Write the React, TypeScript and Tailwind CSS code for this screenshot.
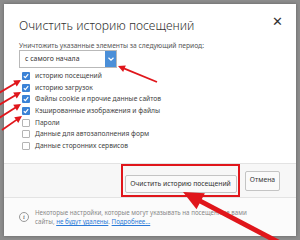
import React from "react";

const items = [
  { label: "историю посещений", checked: true },
  { label: "историю загрузок", checked: true },
  { label: "Файлы cookie и прочие данные сайтов", checked: true },
  { label: "Кэшированные изображения и файлы", checked: true },
  { label: "Пароли", checked: false },
  { label: "Данные для автозаполнения форм", checked: false },
  { label: "Данные сторонних сервисов", checked: false },
];

const Arrow = ({ x1, y1, x2, y2, w, head, hw }: { x1: number; y1: number; x2: number; y2: number; w: number; head: number; hw: number }) => {
  // arrow pointing from (x1,y1) to tip (x2,y2)
  const dx = x2 - x1;
  const dy = y2 - y1;
  const len = Math.hypot(dx, dy);
  const ux = dx / len;
  const uy = dy / len;
  const bx = x2 - ux * head;
  const by = y2 - uy * head;
  const px = -uy;
  const py = ux;
  const pts = `${x2},${y2} ${bx + px * hw},${by + py * hw} ${bx - px * hw},${by - py * hw}`;
  return (
    <g>
      <line x1={x1} y1={y1} x2={bx + ux * 2} y2={by + uy * 2} stroke="#e0161b" strokeWidth={w} />
      <polygon points={pts} fill="#e0161b" />
    </g>
  );
};

export default function App() {
  return (
    <div
      className="relative w-[300px] h-[240px] overflow-hidden bg-[#8c8c8c] pt-[4px] pl-[4px]"
      style={{ fontFamily: '"Noto Sans", "Open Sans", sans-serif' }}
    >
      <div className="w-[292px] h-[232px] bg-white flex flex-col shadow-[0_0_3px_rgba(0,0,0,0.3)]">
        {/* body */}
        <div className="flex-1 pl-[15px] pr-[10px] pt-[10px]">
          <div className="flex justify-between items-center h-[24px]">
            <h2 className="text-[12.2px] font-light text-[#333]">Очистить историю посещений</h2>
            <span className="text-[13px] leading-none text-[#333] mr-[3px] -mt-[10px]">✕</span>
          </div>
          <p className="mt-[3px] text-[6.7px] text-[#555] leading-[9px]">
            Уничтожить указанные элементы за следующий период:
          </p>
          <div className="flex w-[98px] h-[18px] border border-[#b9b9b9]">
            <div className="flex-1 flex items-center pl-[5px] text-[6.9px] text-[#333]">с самого начала</div>
            <div className="w-[11px] bg-[#4b8fd8] flex items-center justify-center">
              <svg width="6" height="4" viewBox="0 0 6 4">
                <path d="M0.5 0.8 L3 3.2 L5.5 0.8" stroke="white" strokeWidth="1.2" fill="none" />
              </svg>
            </div>
          </div>
          <ul className="mt-[2px] pl-[3px]">
            {items.map((it) => (
              <li key={it.label} className="flex items-center h-[11.7px] gap-[5px]">
                <span
                  className={`w-[8px] h-[8px] rounded-[1px] flex items-center justify-center ${
                    it.checked ? "bg-[#3b82d6]" : "border border-[#b5b5b5] bg-white"
                  }`}
                >
                  {it.checked && (
                    <svg width="6" height="6" viewBox="0 0 6 6">
                      <path d="M0.8 3.2 L2.4 4.7 L5.2 1.2" stroke="white" strokeWidth="1.2" fill="none" />
                    </svg>
                  )}
                </span>
                <span className="text-[6.7px] text-[#444]">{it.label}</span>
              </li>
            ))}
          </ul>
        </div>
        {/* buttons */}
        <div className="h-[34px] border-t border-[#e3e3e3] bg-[#f7f7f7] flex items-center justify-end gap-[5px] pr-[16px]">
          <div className="border-2 border-[#e0161b] p-[1.5px]">
            <button className="h-[18px] w-[112px] border border-[#c4c4c4] rounded-[2px] bg-[#fafafa] text-[6.8px] text-[#333]">
              Очистить историю посещений
            </button>
          </div>
          <button className="h-[20px] w-[35px] border border-[#c4c4c4] rounded-[2px] bg-[#fafafa] text-[6.8px] text-[#333]">
            Отмена
          </button>
        </div>
        {/* info */}
        <div className="h-[39px] border-t border-[#e3e3e3] bg-[#fbfbfb] flex items-center pl-[15px] gap-[6px]">
          <span className="w-[10px] h-[10px] rounded-full border border-[#999] flex items-center justify-center text-[7px] italic font-serif text-[#666] shrink-0">
            i
          </span>
          <p className="text-[6.2px] leading-[9.5px] text-[#888]">
            Некоторые настройки, которые могут указывать на посещенные вами
            <br />
            сайты, <span className="text-[#2a7ad8] underline">не будут удалены</span>.{" "}
            <span className="text-[#2a7ad8] underline">Подробнее...</span>
          </p>
        </div>
      </div>

      <svg className="absolute inset-0 pointer-events-none" width="300" height="240" viewBox="0 0 300 240">
        <Arrow x1={157} y1={82} x2={118} y2={66} w={1.8} head={7} hw={3.5} />
        <Arrow x1={-1} y1={93} x2={21} y2={80} w={1.8} head={7} hw={3.5} />
        <Arrow x1={-1} y1={105} x2={21} y2={92} w={1.8} head={7} hw={3.5} />
        <Arrow x1={-1} y1={118} x2={21} y2={104} w={1.8} head={7} hw={3.5} />
        <Arrow x1={2} y1={130} x2={22} y2={116} w={1.8} head={7} hw={3.5} />
        <Arrow x1={282} y1={244} x2={183} y2={192} w={5} head={20} hw={9} />
      </svg>
    </div>
  );
}
